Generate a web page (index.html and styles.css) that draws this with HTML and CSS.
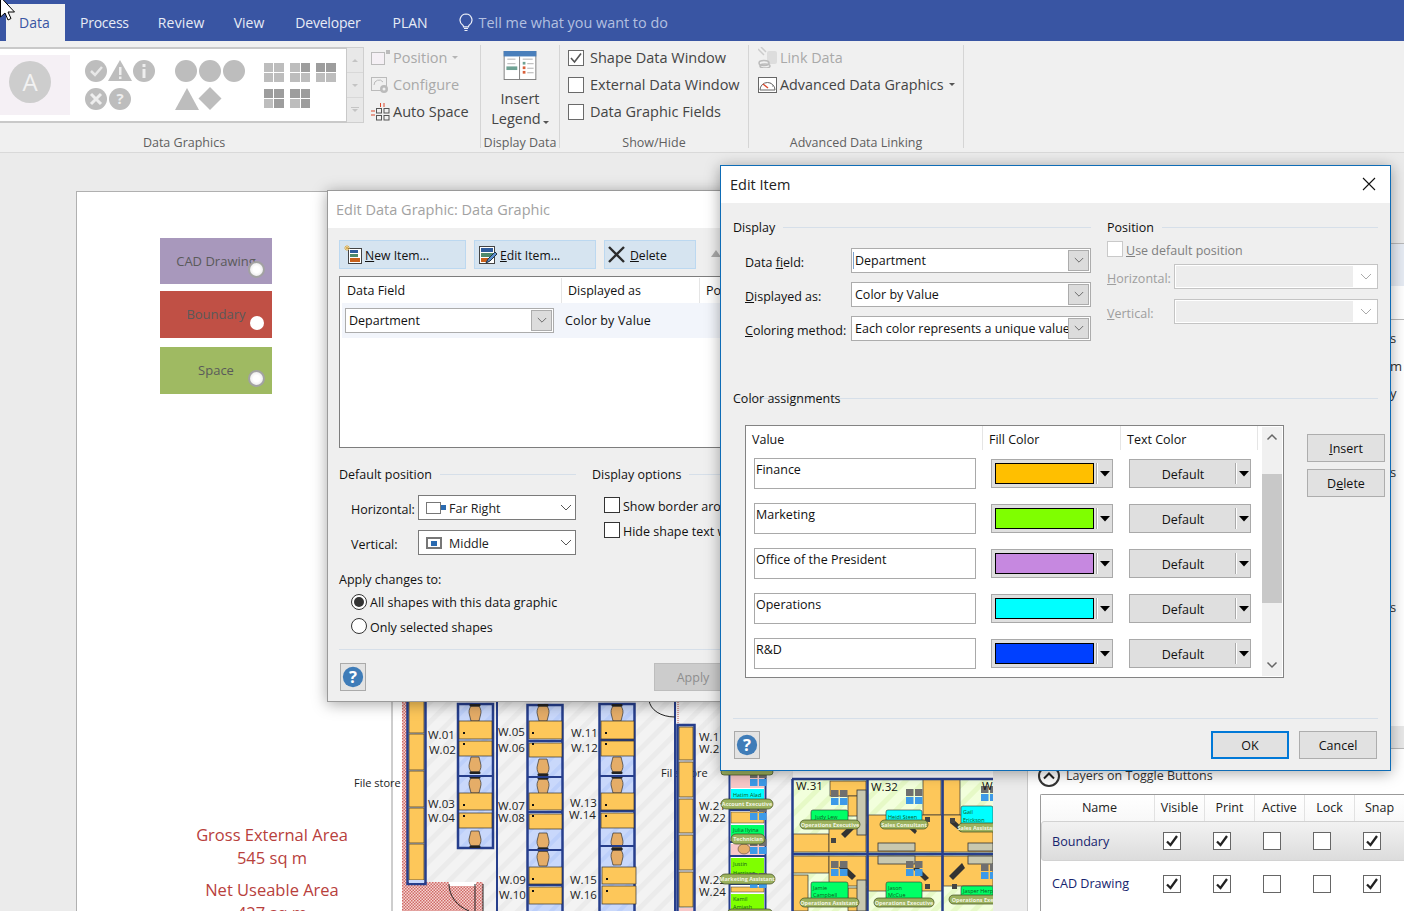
FILE: index.html
```html
<!DOCTYPE html>
<html lang="en">
<head>
<meta charset="utf-8">
<title>Edit Item</title>
<link rel="stylesheet" href="styles.css">
</head>
<body>
<svg class="defs" width="0" height="0">
  <defs>
    <symbol id="chev" viewBox="0 0 12 8"><path d="M1 1l5 5 5-5" fill="none" stroke="currentColor" stroke-width="1"/></symbol>
    <symbol id="tick" viewBox="0 0 16 16"><path d="M3 8l3.500 4L13 3.500" fill="none" stroke="currentColor" stroke-width="1.600"/></symbol>
    <symbol id="tickb" viewBox="0 0 16 16"><path d="M3 8.500l3.500 3.500L13 3" fill="none" stroke="currentColor" stroke-width="2.300"/></symbol>
    <symbol id="help" viewBox="0 0 26 28"><circle cx="13" cy="14" r="11" fill="#3f7cb8"/><text x="13" y="20" class="help-q">?</text></symbol>
    <symbol id="tri" viewBox="0 0 10 6"><path d="M0 0h10L5 5.500z" fill="#000"/></symbol>
    <pattern id="hatch" width="14" height="14" patternUnits="userSpaceOnUse" patternTransform="rotate(-45)"><rect width="14" height="14" fill="#f3f3f3"/><rect width="14" height="5" fill="#ebebeb"/></pattern>
    <pattern id="hatchG" width="14" height="14" patternUnits="userSpaceOnUse" patternTransform="rotate(-45)"><rect width="14" height="14" fill="#f2ffdc"/><rect width="14" height="5" fill="#e6f9c6"/></pattern>
    <pattern id="hatchB" width="12" height="12" patternUnits="userSpaceOnUse" patternTransform="rotate(-45)"><rect width="12" height="12" fill="#c9d8fb"/><rect width="12" height="4" fill="#bccffa"/></pattern>
    <pattern id="checker" width="3" height="3" patternUnits="userSpaceOnUse"><rect width="3" height="3" fill="#f6d5d2"/><rect width="1.500" height="1.500" fill="#cf6a66"/><rect x="1.500" y="1.500" width="1.500" height="1.500" fill="#cf6a66"/></pattern>
    <g id="chair"><path d="M-4-8h8c2 3 2.500 6 1.500 9-.5 2-1 4-1.500 6h-8c-.5-2-1-4-1.500-6-1-3-.5-6 1.500-9z" fill="#e5ad68" stroke="#333" stroke-width=".7"/><rect x="-5.500" y="-10" width="11" height="2.500" rx="1" fill="#222"/></g>
    <g id="windowset"><rect width="7.500" height="7" fill="#6f6f6f"/><rect x="9" width="7.500" height="7" fill="#6f6f6f"/><rect y="8" width="7.500" height="7" fill="#3d9ae8"/><rect x="9" y="8" width="7.500" height="7" fill="#3d9ae8"/></g>
  </defs>
</svg>

<header class="ribbon">
  <nav class="tabs">
    <a class="tab tab-active">Data</a>
    <a class="tab t-process">Process</a>
    <a class="tab t-review">Review</a>
    <a class="tab t-view">View</a>
    <a class="tab t-dev">Developer</a>
    <a class="tab t-plan">PLAN</a>
    <svg class="bulb" width="14" height="19" viewBox="0 0 14 19"><path d="M7 1a6 6 0 0 0-3.400 10.900c.6.5.9 1.100.9 1.900h5c0-.8.3-1.400.9-1.900A6 6 0 0 0 7 1zM5 15.500h4M5.500 17.500h3" fill="none" stroke="#eef1f9" stroke-width="1.200"/></svg>
    <span class="tellme">Tell me what you want to do</span>
  </nav>
  <div class="rbody">
    <section class="grp g-graphics">
      <div class="grp-main">
        <div class="gallery">
          <svg width="347" height="73" viewBox="0 48 347 73">
            <rect x="0" y="54" width="70" height="60" fill="#f5f0f5"/>
            <circle cx="30" cy="81" r="21" fill="#cdcdcd"/>
            <text x="30" y="90" class="gal-a">A</text>
            <circle cx="96" cy="70" r="11" fill="#bdbdbd"/><path d="M91 70l4 4 7-8" stroke="#e8e8e8" stroke-width="2.500" fill="none"/>
            <path d="M120 59l12 21h-24z" fill="#bdbdbd"/><rect x="119" y="66" width="2.500" height="8" fill="#eee"/><rect x="119" y="75.500" width="2.500" height="2.500" fill="#eee"/>
            <circle cx="144" cy="70" r="11" fill="#bdbdbd"/><rect x="142.500" y="68" width="3" height="9" fill="#eee"/><rect x="142.500" y="63" width="3" height="3" fill="#eee"/>
            <circle cx="96" cy="98" r="11" fill="#bdbdbd"/><path d="M91 93l10 10M101 93l-10 10" stroke="#eee" stroke-width="3"/>
            <circle cx="120" cy="98" r="11" fill="#bdbdbd"/><text x="120" y="103" class="gal-q">?</text>
            <circle cx="186" cy="70" r="11" fill="#bdbdbd"/><circle cx="210" cy="70" r="11" fill="#bdbdbd"/><circle cx="234" cy="70" r="11" fill="#bdbdbd"/>
            <path d="M187 87l12 22h-24z" fill="#bdbdbd"/><path d="M210 86l11.500 11.500L210 109l-11.500-11.500z" fill="#bdbdbd"/>
            <g fill="#bdbdbd">
              <rect x="264" y="62" width="9" height="9"/><rect x="274" y="62" width="10" height="9"/><rect x="264" y="72" width="9" height="9"/><rect x="274" y="72" width="10" height="9"/>
              <rect x="290" y="62" width="10" height="9"/><rect x="290" y="72" width="10" height="9"/><rect x="301" y="72" width="9" height="9"/>
              <rect x="326" y="72" width="10" height="9"/><rect x="316" y="72" width="9" height="9"/>
              <rect x="264" y="98" width="9" height="9"/><rect x="290" y="98" width="10" height="9"/>
            </g>
            <g fill="#9d9d9d">
              <rect x="301" y="62" width="9" height="9"/><rect x="316" y="62" width="9" height="9"/><rect x="326" y="62" width="10" height="9"/>
              <rect x="264" y="88" width="9" height="9"/><rect x="274" y="88" width="10" height="9"/><rect x="274" y="98" width="10" height="9"/>
              <rect x="290" y="88" width="10" height="9"/><rect x="301" y="88" width="9" height="9"/><rect x="301" y="98" width="9" height="9"/>
            </g>
          </svg>
        </div>
        <div class="gal-scroll">
          <span class="gal-btn"><i class="up"></i></span>
          <span class="gal-btn"><i class="down"></i></span>
          <span class="gal-btn gal-more"><i class="down"></i></span>
        </div>
        <ul class="cmds cmds-graphics">
          <li class="cmd cmd-off"><svg width="19" height="15" viewBox="0 0 19 15"><rect x=".5" y="2.500" width="13" height="12" fill="#f5f0f5" stroke="#bbb"/><rect x="15" y="0" width="4" height="4" fill="#bbb"/></svg>Position<i class="caret"></i></li>
          <li class="cmd cmd-off"><svg width="19" height="18" viewBox="0 0 19 18"><rect x=".5" y="1.500" width="15" height="13" fill="none" stroke="#bbb"/><circle cx="13" cy="13" r="4" fill="#bbb"/><circle cx="13" cy="13" r="1.500" fill="#f0f0f0"/><path d="M3 9a5 5 0 0 1 9-3" fill="none" stroke="#bbb"/></svg>Configure</li>
          <li class="cmd"><svg width="19" height="19" viewBox="0 0 19 19"><g fill="none" stroke="#555"><rect x="5.500" y="6.500" width="5" height="4.500"/><rect x="13" y="6.500" width="5" height="4.500"/><rect x="5.500" y="13.500" width="5" height="4.500"/><rect x="13" y="13.500" width="5" height="4.500"/></g><path d="M9.500 1v4M13 1v4M0 9h4M0 13h4" stroke="#d9472b"/></svg>Auto Space</li>
        </ul>
      </div>
      <h3 class="grp-label gl-graphics">Data Graphics</h3>
    </section>
    <section class="grp g-display">
      <div class="grp-main legend-btn">
        <svg width="36" height="32" viewBox="0 0 36 32"><rect x=".5" y=".5" width="35" height="31" fill="#fff" stroke="#777"/><rect width="36" height="6" fill="#4a7fbb"/><path d="M17.500 6v25" stroke="#777"/><path d="M4 9h9M4 14h9M21 9h11M26 14h7M26 19h7M26 24h7" stroke="#aaa"/><rect x="3" y="17" width="12" height="4" fill="#6fa294"/><rect x="21" y="12" width="3" height="3" fill="#6fa294"/><rect x="21" y="17" width="3" height="3" fill="#d9603a"/><rect x="21" y="22" width="3" height="3" fill="#d9603a"/></svg>
        <span class="legend-text">Insert<br>Legend<i class="caret dark"></i></span>
      </div>
      <h3 class="grp-label">Display Data</h3>
    </section>
    <section class="grp g-show">
      <ul class="grp-main checks">
        <li class="check"><span class="box"><svg width="16" height="16"><use href="#tick"/></svg></span>Shape Data Window</li>
        <li class="check"><span class="box"></span>External Data Window</li>
        <li class="check"><span class="box"></span>Data Graphic Fields</li>
      </ul>
      <h3 class="grp-label">Show/Hide</h3>
    </section>
    <section class="grp g-adv">
      <ul class="grp-main cmds adv">
        <li class="cmd cmd-off"><svg width="19" height="21" viewBox="0 0 19 21"><path d="M0 2l6 6M3 0l5 5" stroke="#ccc" stroke-width="1.500"/><rect x="9" y="4" width="10" height="13" rx="2" fill="#ddd"/><ellipse cx="6" cy="16" rx="5" ry="2.500" fill="none" stroke="#bbb" stroke-width="1.500"/><ellipse cx="7" cy="19" rx="5" ry="2" fill="none" stroke="#bbb" stroke-width="1.500"/></svg>Link Data</li>
        <li class="cmd"><svg width="19" height="16" viewBox="0 0 19 16"><rect x=".5" y=".5" width="18" height="15" fill="#fff" stroke="#666"/><path d="M2 13a7.500 7.500 0 0 1 15 0z" fill="#fff" stroke="#666"/><path d="M5 7l5 4" stroke="#d9472b" stroke-width="1.400"/><path d="M12 6l1 1M14 9l1 0" stroke="#888"/></svg>Advanced Data Graphics<i class="caret dark"></i></li>
      </ul>
      <h3 class="grp-label">Advanced Data Linking</h3>
    </section>
  </div>
</header>

<main class="workspace">
  <div class="page">
    <svg class="plan" width="916" height="719" viewBox="77 192 916 719">
      <path d="M392 640V911" stroke="#9c9c9c"/>
      <rect x="402" y="640" width="391" height="271" fill="url(#hatch)"/>
      <rect x="402" y="640" width="6" height="271" fill="url(#checker)"/>
      <text x="354" y="787" class="lbl lbl-file">File store</text>
      <text x="661" y="777" class="lbl lbl-file">File store</text>
      <rect x="672" y="770" width="4" height="14" fill="#f1f1f1"/>

      <text x="272" y="841" class="area">Gross External Area</text>
      <text x="272" y="864" class="area">545 sq m</text>
      <text x="272" y="896" class="area">Net Useable Area</text>
      <text x="272" y="919" class="area">427 sq m</text>

      <rect x="408" y="882" width="75" height="29" fill="url(#checker)"/>
      <rect x="449" y="882" width="27" height="4" fill="#fff"/>
      <path d="M449 884c0 12 8 22 20 27" class="thin"/>
      <path d="M475 884V911M483 884V911" class="thin"/>

      <g class="navy">
        <rect x="407.500" y="690" width="18" height="194" />
      </g>
      <g class="desk-s">
        <rect x="409" y="690" width="15" height="43"/><rect x="409" y="734" width="15" height="36"/><rect x="409" y="771" width="15" height="36"/><rect x="409" y="808" width="15" height="35"/><rect x="409" y="844" width="15" height="36"/>
      </g>
      <rect x="409" y="880" width="15" height="3" fill="#c9d8fb"/>

      <path d="M497 690V911M675 690V911" class="navy-l"/>
      <path d="M649 700c1 10 12 17 26 17" class="thin"/>
      <path d="M678 700V730" stroke="#c0504d" stroke-dasharray="1 1"/>

      <!-- desk clusters -->
      <g id="c1">
        <rect x="458" y="704" width="35" height="144" fill="url(#hatchB)" class="navy"/>
        <use href="#chair" x="475" y="714"/>
        <use href="#chair" transform="translate(475 764) rotate(180)"/>
        <use href="#chair" x="475" y="786"/>
        <use href="#chair" transform="translate(475 838) rotate(180)"/>
        <path d="M458 776H493" class="navy-l"/>
        <g class="desk-s"><rect x="459" y="721" width="33" height="18"/><rect x="459" y="741" width="33" height="15"/><rect x="459" y="793" width="33" height="17"/><rect x="459" y="813" width="33" height="15"/></g>
        <g class="dot"><rect x="463" y="732" width="2" height="2"/><rect x="463" y="743" width="2" height="2"/><rect x="463" y="804" width="2" height="2"/><rect x="463" y="815" width="2" height="2"/></g>
      </g>
      <g id="c2">
        <rect x="527.500" y="705" width="35" height="220" fill="url(#hatchB)" class="navy"/>
        <use href="#chair" x="543" y="714"/>
        <use href="#chair" transform="translate(543 766) rotate(180)"/>
        <use href="#chair" x="543" y="787"/>
        <use href="#chair" transform="translate(543 840) rotate(180)"/>
        <use href="#chair" x="543" y="859"/>
        <path d="M527 741H563M527 777H563M527 812H563M527 850H563M527 885H563" class="navy-l"/>
        <g class="desk-s"><rect x="529" y="721" width="33" height="18"/><rect x="529" y="743" width="33" height="14"/><rect x="529" y="793" width="33" height="17"/><rect x="529" y="814" width="33" height="15"/><rect x="529" y="867" width="33" height="17"/><rect x="529" y="887" width="33" height="17"/></g>
        <g class="dot"><rect x="532" y="732" width="2" height="2"/><rect x="532" y="743" width="2" height="2"/><rect x="532" y="804" width="2" height="2"/><rect x="532" y="815" width="2" height="2"/><rect x="532" y="878" width="2" height="2"/><rect x="532" y="890" width="2" height="2"/></g>
      </g>
      <g id="c3">
        <rect x="599.500" y="704" width="35" height="220" fill="url(#hatchB)" class="navy"/>
        <use href="#chair" x="617" y="714"/>
        <use href="#chair" transform="translate(617 764) rotate(180)"/>
        <use href="#chair" x="617" y="786"/>
        <use href="#chair" transform="translate(617 840) rotate(180)"/>
        <use href="#chair" x="617" y="858"/>
        <path d="M599 740H635M599 776H635M599 811H635M599 846H635" class="navy-l"/>
        <g class="desk-s"><rect x="601" y="721" width="33" height="18"/><rect x="601" y="741" width="33" height="15"/><rect x="601" y="793" width="33" height="17"/><rect x="601" y="813" width="33" height="15"/><rect x="602" y="867" width="34" height="17"/><rect x="602" y="886" width="34" height="18"/></g>
        <g class="dot"><rect x="605" y="732" width="2" height="2"/><rect x="605" y="743" width="2" height="2"/><rect x="605" y="804" width="2" height="2"/><rect x="605" y="815" width="2" height="2"/><rect x="606" y="878" width="2" height="2"/><rect x="606" y="890" width="2" height="2"/></g>
      </g>

      <rect x="677.500" y="725" width="17" height="195" class="navy"/>
      <g class="desk-s"><rect x="679" y="727" width="14" height="33"/><rect x="679" y="762" width="14" height="35"/><rect x="679" y="799" width="14" height="34"/><rect x="679" y="835" width="14" height="35"/><rect x="679" y="872" width="14" height="35"/></g>
      <rect x="679" y="908" width="14" height="3" fill="#f8c8c8"/>

      <g class="wlabel">
        <text x="428" y="739">W.01</text><text x="429" y="754">W.02</text><text x="428" y="808">W.03</text><text x="428" y="822">W.04</text>
        <text x="498" y="736">W.05</text><text x="498" y="752">W.06</text><text x="498" y="810">W.07</text><text x="498" y="822">W.08</text><text x="499" y="884">W.09</text><text x="499" y="899">W.10</text>
        <text x="571" y="737">W.11</text><text x="571" y="752">W.12</text><text x="570" y="807">W.13</text><text x="569" y="819">W.14</text><text x="570" y="884">W.15</text><text x="570" y="899">W.16</text>
        <text x="699" y="741">W.1</text><text x="699" y="753">W.2</text><text x="699" y="810">W.21</text><text x="699" y="822">W.22</text><text x="699" y="884">W.23</text><text x="699" y="896">W.24</text>
      </g>

      <!-- narrow column of people -->
      <g>
        <rect x="729" y="771" width="37" height="140" fill="#fff"/>
        <rect x="731" y="775" width="33" height="13" fill="#f8c8c8"/>
        <rect x="731" y="789" width="33" height="19" fill="#00ffff"/>
        <rect x="731" y="812" width="33" height="11" fill="#fdc75a" stroke="#333" stroke-width=".5"/>
        <rect x="731" y="825" width="33" height="14" fill="#00ff66"/>
        <rect x="731" y="844" width="33" height="12" fill="#f8c8c8"/>
        <ellipse cx="744" cy="849" rx="6" ry="5" fill="#e5ad68" stroke="#333" stroke-width=".5"/>
        <rect x="731" y="858" width="33" height="27" fill="#7fff00"/>
        <rect x="731" y="887" width="33" height="5" fill="#fdc75a" stroke="#333" stroke-width=".5"/>
        <rect x="731" y="894" width="33" height="17" fill="#7fff00"/>
        <path d="M729.500 771V911M765.500 771V911M729 810H766M729 842H766M729 856H766M729 884H766" class="navy-l"/>
        <text x="733" y="797" class="tiny">Hatim Alad</text>
        <text x="733" y="832" class="tiny">Julia Ilyina</text>
        <text x="733" y="866" class="tiny">Justin</text><text x="733" y="875" class="tiny">Harrison</text>
        <text x="733" y="901" class="tiny">Kamil</text><text x="733" y="909" class="tiny">Amjash</text>
        <use href="#windowset" x="750" y="771"/><use href="#windowset" x="750" y="805"/><use href="#windowset" x="750" y="839"/><use href="#windowset" x="750" y="873"/>
        <g class="pill"><rect x="721" y="799" width="52" height="10" rx="5"/><rect x="731" y="834" width="34" height="10" rx="5"/><rect x="720" y="874" width="55" height="10" rx="5"/><rect x="727" y="909" width="46" height="10" rx="5"/><rect x="721" y="769" width="52" height="6" rx="3"/></g>
        <g class="pilltext"><text x="747" y="806">Account Executive</text><text x="748" y="841">Technician</text><text x="747" y="881">Marketing Assistant</text></g>
      </g>

      <!-- rooms -->
      <g>
        <rect x="792" y="778" width="201" height="133" fill="url(#hatchG)"/>
        <g class="desk-s">
          <rect x="830" y="781" width="36" height="15"/><rect x="793" y="834" width="36" height="18"/><rect x="829" y="824" width="37" height="28"/>
          <rect x="848" y="796" width="18" height="20"/>
          <rect x="923" y="779" width="18" height="36"/><rect x="868" y="815" width="74" height="37"/><rect x="943" y="779" width="17" height="36"/><rect x="943" y="815" width="50" height="37"/>
          <rect x="793" y="856" width="36" height="17"/><rect x="829" y="856" width="37" height="30"/><rect x="868" y="856" width="74" height="35"/><rect x="943" y="856" width="50" height="30"/>
          <rect x="848" y="888" width="18" height="23"/><rect x="793" y="875" width="15" height="36"/>
        </g>
        <path d="M792 779H993M792 854H993M792.500 779V911M867.500 779V911M942.500 779V911" class="navy-l navy-w"/>
        <g class="fit"><rect x="857" y="790" width="9" height="45"/><rect x="878" y="843" width="37" height="8"/><rect x="878" y="856" width="37" height="8"/><rect x="968" y="843" width="25" height="8"/><rect x="968" y="856" width="25" height="8"/><rect x="857" y="880" width="9" height="31"/></g>
        <g class="chairs"><path d="M841 834l13-12 4 3-13 13z"/><path d="M915 834l-13-12 4-3 11 12z"/><path d="M961 832l-11-9 4-3 10 9z"/><path d="M842 863l14 13-4 4-13-12z"/><path d="M917 866l12 12-4 3-12-12z"/><path d="M962 863l-13 13 4 4 12-12z"/></g>
        <g class="tinybox"><rect x="831" y="838" width="5" height="5"/><rect x="925" y="817" width="5" height="5"/><rect x="950" y="818" width="5" height="5"/><rect x="925" y="884" width="5" height="5"/><rect x="952" y="884" width="5" height="5"/></g>
        <use href="#windowset" x="831" y="790"/><use href="#windowset" x="906" y="789"/><use href="#windowset" x="981" y="786"/>
        <use href="#windowset" x="831" y="861"/><use href="#windowset" x="906" y="861"/><use href="#windowset" x="981" y="864"/>
        <rect x="811" y="810" width="37" height="18" rx="2" fill="#00ff66" stroke="#333" stroke-width=".6"/>
        <rect x="886" y="810" width="36" height="18" rx="2" fill="#00ffff" stroke="#333" stroke-width=".6"/>
        <rect x="961" y="806" width="32" height="24" rx="2" fill="#00ffff" stroke="#333" stroke-width=".6"/>
        <rect x="811" y="882" width="37" height="22" rx="2" fill="#00ff66" stroke="#333" stroke-width=".6"/>
        <rect x="886" y="882" width="36" height="22" rx="2" fill="#00ff66" stroke="#333" stroke-width=".6"/>
        <rect x="961" y="886" width="32" height="16" rx="2" fill="#00ff66" stroke="#333" stroke-width=".6"/>
        <text x="815" y="819" class="tiny">Judy Lew</text><text x="888" y="819" class="tiny">Heidi Steen</text><text x="963" y="814" class="tiny">Gail</text><text x="963" y="822" class="tiny">Erickson</text>
        <text x="813" y="890" class="tiny">Jamie</text><text x="813" y="897" class="tiny">Campbell</text><text x="888" y="890" class="tiny">Jason</text><text x="888" y="897" class="tiny">McCue</text><text x="963" y="893" class="tiny">Jasper Herp</text>
        <g class="pill"><rect x="800" y="820" width="60" height="9" rx="4.500"/><rect x="880" y="820" width="48" height="9" rx="4.500"/><rect x="958" y="823" width="40" height="9" rx="4.500"/><rect x="800" y="898" width="59" height="9" rx="4.500"/><rect x="874" y="898" width="60" height="9" rx="4.500"/><rect x="949" y="895" width="50" height="9" rx="4.500"/></g>
        <g class="pilltext"><text x="830" y="827">Operations Executive</text><text x="904" y="827">Sales Consultant</text><text x="978" y="830">Sales Assistant</text><text x="829" y="905">Operations Assistant</text><text x="904" y="905">Operations Executive</text><text x="974" y="902">Operations Exec</text></g>
        <text x="796" y="790" class="wroom">W.31</text>
        <text x="871" y="791" class="wroom">W.32</text>
        <text x="982" y="790" class="wroom">W</text>
      </g>
    </svg>
    <ul class="legend">
      <li class="leg leg-cad">CAD Drawing<i class="knob"></i></li>
      <li class="leg leg-bound">Boundary<i class="knob knob-on"></i></li>
      <li class="leg leg-space">Space<i class="knob"></i></li>
    </ul>
  </div>

  <aside class="side-top">
    <div class="side-row sr1"></div>
    <div class="side-row sr2"></div>
    <span class="side-s s1">s</span><span class="side-s s2">m</span><span class="side-s s3">y</span><span class="side-s s4">s</span><span class="side-s s5">s</span>
    <div class="side-shade"></div>
  </aside>

  <aside class="layers">
    <div class="layers-head">
      <span class="round-btn"><svg width="12" height="8" viewBox="0 0 12 8"><path d="M1 6.500l5-5 5 5" fill="none" stroke="#222" stroke-width="2"/></svg></span>
      <span class="layers-title">Layers on Toggle Buttons</span>
    </div>
    <div class="ltable">
      <div class="lrow lhead"><span class="lname lname-h">Name</span><span class="lc">Visible</span><span class="lc">Print</span><span class="lc">Active</span><span class="lc">Lock</span><span class="lc">Snap</span></div>
      <div class="lrow lsel"><span class="lname">Boundary</span><span class="lc"><b class="lbox"><svg width="16" height="16"><use href="#tickb"/></svg></b></span><span class="lc"><b class="lbox"><svg width="16" height="16"><use href="#tickb"/></svg></b></span><span class="lc"><b class="lbox"></b></span><span class="lc"><b class="lbox"></b></span><span class="lc"><b class="lbox"><svg width="16" height="16"><use href="#tickb"/></svg></b></span></div>
      <div class="lrow lplain"><span class="lname">CAD Drawing</span><span class="lc"><b class="lbox"><svg width="16" height="16"><use href="#tickb"/></svg></b></span><span class="lc"><b class="lbox"><svg width="16" height="16"><use href="#tickb"/></svg></b></span><span class="lc"><b class="lbox"></b></span><span class="lc"><b class="lbox"></b></span><span class="lc"><b class="lbox"><svg width="16" height="16"><use href="#tickb"/></svg></b></span></div>
    </div>
  </aside>
</main>

<!-- Edit Data Graphic window -->
<div class="dialog dlg-graphic">
  <div class="dlg-title dlg-title-off">Edit Data Graphic: Data Graphic</div>
  <div class="dlg-body">
    <div class="toolbar">
      <button class="tb tb-new"><svg width="18" height="20" viewBox="0 0 18 20"><rect x="4.500" y="3.500" width="13" height="15" fill="#fff" stroke="#444"/><rect x="6" y="5" width="8" height="3" fill="#2f5c9c"/><rect x="6" y="9" width="8" height="3" fill="#4f8a6c"/><rect x="6" y="13" width="10" height="4" fill="#c8601a"/><path d="M3 0v6M0 3h6M1 1l4 4M5 1l-4 4" stroke="#e0b050"/></svg><span><u>N</u>ew Item...</span></button>
      <button class="tb tb-edit"><svg width="18" height="20" viewBox="0 0 18 20"><rect x=".5" y="1.500" width="15" height="17" fill="#fff" stroke="#444"/><rect x="2" y="3" width="12" height="4" fill="#2f5c9c"/><rect x="2" y="8" width="12" height="4" fill="#4f8a6c"/><rect x="2" y="13" width="8" height="4" fill="#c8601a"/><path d="M7 18l2-4 7-7 2 2-7 7z" fill="#5b8fd0" stroke="#234"/></svg><span><u>E</u>dit Item...</span></button>
      <button class="tb tb-del"><svg width="20" height="18" viewBox="0 0 20 18"><path d="M2 1l15 15M17 1L2 16" stroke="#2c2c2c" stroke-width="2.400"/></svg><span><u>D</u>elete</span></button>
      <i class="tb-up"></i>
    </div>
    <div class="dlist">
      <div class="dlist-head"><span class="dh dh1">Data Field</span><span class="dh dh2">Displayed as</span><span class="dh dh3">Position</span></div>
      <div class="dlist-row">
        <div class="combo combo-dept"><span class="combo-v">Department</span><span class="combo-b"><svg width="12" height="8"><use href="#chev"/></svg></span></div>
        <span class="dlist-val">Color by Value</span>
      </div>
    </div>
    <div class="opts">
      <div class="opt-left">
        <div class="sec"><span>Default position</span></div>
        <div class="frow fr-h"><label>Horizontal:</label><div class="select"><svg width="20" height="12" viewBox="0 0 20 12"><rect x=".5" y=".5" width="14" height="11" fill="none" stroke="#777"/><rect x="15" y="3" width="5" height="5" fill="#2a6ab0"/></svg><span class="sel-far">Far Right</span><svg class="sel-chev" width="12" height="8"><use href="#chev"/></svg></div></div>
        <div class="frow fr-v"><label>Vertical:</label><div class="select"><svg width="20" height="12" viewBox="0 0 20 12"><rect x="1" y="1" width="14" height="10" fill="none" stroke="#777" stroke-width="2"/><rect x="5" y="4" width="6" height="5" fill="#2a6ab0"/></svg><span class="sel-mid">Middle</span><svg class="sel-chev" width="12" height="8"><use href="#chev"/></svg></div></div>
      </div>
      <div class="opt-right">
        <div class="sec sec-long"><span>Display options</span></div>
        <div class="cb cb1"><i class="cbox"></i>Show border around shape</div>
        <div class="cb cb2"><i class="cbox"></i>Hide shape text when</div>
      </div>
    </div>
    <div class="apply-h">Apply changes to:</div>
    <div class="radio r1"><i class="rad rad-on"></i>All shapes with this data graphic</div>
    <div class="radio r2"><i class="rad"></i>Only selected shapes</div>
    <div class="sep sep-g"></div>
    <div class="dlg-foot">
      <button class="help-btn"><svg width="24" height="26"><use href="#help"/></svg></button>
      <button class="btn-apply">Apply</button>
    </div>
  </div>
</div>

<!-- Edit Item window -->
<div class="dialog dlg-item">
  <div class="dlg-title">Edit Item<svg class="close" width="14" height="14" viewBox="0 0 14 14"><path d="M1 1l12 12M13 1L1 13" stroke="#111" stroke-width="1.100"/></svg></div>
  <div class="dlg-body item-body">
    <div class="item-top">
      <div class="item-display">
        <div class="sec"><span>Display</span></div>
        <div class="irow ir1"><label>Data <u>f</u>ield:</label><div class="combo combo-i combo-caret"><span class="combo-v">Department</span><span class="combo-b"><svg width="12" height="8"><use href="#chev"/></svg></span></div></div>
        <div class="irow"><label><u>D</u>isplayed as:</label><div class="combo combo-i"><span class="combo-v">Color by Value</span><span class="combo-b"><svg width="12" height="8"><use href="#chev"/></svg></span></div></div>
        <div class="irow"><label><u>C</u>oloring method:</label><div class="combo combo-i"><span class="combo-v">Each color represents a unique value</span><span class="combo-b"><svg width="12" height="8"><use href="#chev"/></svg></span></div></div>
      </div>
      <div class="item-pos">
        <div class="sec"><span>Position</span></div>
        <div class="cb cb-off"><i class="cbox cbox-off"></i><span><u>U</u>se default position</span></div>
        <div class="prow pr1"><label><u>H</u>orizontal:</label><div class="pselect"><span class="pfill"></span><svg width="12" height="8"><use href="#chev"/></svg></div></div>
        <div class="prow pr2"><label><u>V</u>ertical:</label><div class="pselect"><span class="pfill"></span><svg width="12" height="8"><use href="#chev"/></svg></div></div>
      </div>
    </div>
    <div class="sec sec-through"><span>Color assignments</span></div>
    <div class="assign">
      <div class="atable">
        <div class="amain">
          <div class="ahead"><span class="ah1">Value</span><span class="ah2">Fill Color</span><span class="ah3">Text Color</span></div>
          <div class="arow"><span class="aval">Finance</span><span class="afill"><i class="swatch sw-fin"></i><i class="adiv"></i><svg width="10" height="6"><use href="#tri"/></svg></span><span class="atext"><em>Default</em><i class="adiv"></i><svg width="10" height="6"><use href="#tri"/></svg></span></div>
          <div class="arow"><span class="aval">Marketing</span><span class="afill"><i class="swatch sw-mkt"></i><i class="adiv"></i><svg width="10" height="6"><use href="#tri"/></svg></span><span class="atext"><em>Default</em><i class="adiv"></i><svg width="10" height="6"><use href="#tri"/></svg></span></div>
          <div class="arow"><span class="aval">Office of the President</span><span class="afill"><i class="swatch sw-off"></i><i class="adiv"></i><svg width="10" height="6"><use href="#tri"/></svg></span><span class="atext"><em>Default</em><i class="adiv"></i><svg width="10" height="6"><use href="#tri"/></svg></span></div>
          <div class="arow"><span class="aval">Operations</span><span class="afill"><i class="swatch sw-ops"></i><i class="adiv"></i><svg width="10" height="6"><use href="#tri"/></svg></span><span class="atext"><em>Default</em><i class="adiv"></i><svg width="10" height="6"><use href="#tri"/></svg></span></div>
          <div class="arow"><span class="aval">R&amp;D</span><span class="afill"><i class="swatch sw-rd"></i><i class="adiv"></i><svg width="10" height="6"><use href="#tri"/></svg></span><span class="atext"><em>Default</em><i class="adiv"></i><svg width="10" height="6"><use href="#tri"/></svg></span></div>
        </div>
        <div class="ascroll">
          <svg width="12" height="8" viewBox="0 0 12 8"><path d="M1.500 6.500L6 2l4.500 4.500" fill="none" stroke="#666" stroke-width="1.500"/></svg>
          <span class="athumb"></span>
          <svg width="12" height="8" viewBox="0 0 12 8"><path d="M1.500 1.500L6 6l4.500-4.500" fill="none" stroke="#666" stroke-width="1.500"/></svg>
        </div>
      </div>
      <div class="aside-btns">
        <button class="gbtn"><u>I</u>nsert</button>
        <button class="gbtn">D<u>e</u>lete</button>
      </div>
    </div>
    <div class="sep sep-i"></div>
    <div class="dlg-foot foot-i">
      <button class="help-btn"><svg width="24" height="26"><use href="#help"/></svg></button>
      <div class="foot-right">
        <button class="gbtn gbtn-ok">OK</button>
        <button class="gbtn">Cancel</button>
      </div>
    </div>
  </div>
</div>

<svg class="cursor" width="17" height="26" viewBox="0 0 17 26"><path d="M.5-3L.5 17l4.500-4 3 7 3-1.500-3-6.500h6.500z" fill="#fff" stroke="#000"/></svg>
</body>
</html>
```
FILE: styles.css
```css
* { box-sizing: border-box; }
html, body { margin: 0; padding: 0; }
body {
  width: 1404px; height: 911px; overflow: hidden; position: relative;
  background: #ebebeb; color: #111;
  font-family: "Open Sans", "Noto Sans", sans-serif; font-size: 12.5px;
}
ul { list-style: none; margin: 0; padding: 0; }
h3 { margin: 0; font-weight: 400; }
i, em { font-style: normal; }
button { font: inherit; color: inherit; padding: 0; cursor: default; }
.defs { position: absolute; }
.help-q { font: 700 18px "Open Sans", sans-serif; fill: #fff; text-anchor: middle; }

/* Ribbon */
.ribbon { height: 153px; background: #f0f0f0; border-bottom: 1px solid #d9d9d9; }
.tabs { height: 41px; background: #3955a3; display: flex; align-items: flex-end; padding-left: 6px; font-size: 14px; color: #e8ecf6; }
.tab { display: block; height: 37px; line-height: 37px; }
.tab-active { width: 59px; background: #f0f0f0; color: #3955a3; padding-left: 13px; }
.t-process { margin-left: 15px; letter-spacing: -.25px; }
.t-review { margin-left: 29px; letter-spacing: .2px; }
.t-view { margin-left: 29px; }
.t-dev { margin-left: 31px; letter-spacing: -.2px; }
.t-plan { margin-left: 32px; }
.bulb { margin: 0 0 9px 31px; }
.tellme { margin-left: 6px; height: 37px; line-height: 37px; color: #b4c0e0; font-size: 14.400px; }

.rbody { height: 111px; display: flex; }
.grp { display: flex; flex-direction: column; position: relative; flex: none; padding-top: 6px; }
.grp-main { height: 84px; }
.grp-label { position: absolute; left: 0; right: 0; top: 90px; text-align: center; font-size: 12.500px; line-height: 16px; color: #5f5f5f; }
.g-graphics { width: 481px; border-right: 1px solid #d5d5d5; margin: 4px 0 4px; padding-top: 2px; }
.g-graphics .grp-main { display: flex; }
.gl-graphics { left: 0; width: 368px; }
.gallery { width: 347px; height: 76px; background: #fff; border: 2px solid #c9c9c9; border-left: 0; border-right: 1px solid #c9c9c9; }
.gallery svg { display: block; }
.gal-scroll { width: 17px; height: 76px; display: flex; flex-direction: column; border: 1px solid #cfcfcf; border-left: 0; background: #e8e8e8; }
.gal-btn { flex: 1; display: flex; align-items: center; justify-content: center; border-bottom: 1px solid #d8d8d8; position: relative; }
.gal-more { border-bottom: 0; }
.gal-btn i { width: 0; height: 0; border: 3.500px solid transparent; }
.gal-btn .up { border-bottom-color: #c4c4c4; border-top-width: 0; }
.gal-btn .down { border-top-color: #c4c4c4; border-bottom-width: 0; }
.gal-more::before { content: ""; position: absolute; top: 9px; left: 4px; width: 8px; height: 1px; background: #c4c4c4; }
.cmds { margin-left: 7px; display: flex; flex-direction: column; gap: 0; font-size: 14.500px; }
.cmds-graphics { margin-top: -3px; }
.cmd { height: 27px; display: flex; align-items: center; gap: 3px; white-space: nowrap; color: #444; }
.cmd-off { color: #a9a9a9; }
.caret { display: inline-block; width: 0; height: 0; border: 3px solid transparent; border-top: 3.500px solid #b5b5b5; border-bottom: 0; margin-left: 2px; }
.caret.dark { border-top-color: #555; }

.g-display { width: 79px; border-right: 1px solid #d5d5d5; margin: 4px 0; padding-top: 0; }
.legend-btn { display: flex; flex-direction: column; align-items: center; padding-top: 6px; font-size: 14.500px; color: #444; }
.legend-text { text-align: center; line-height: 20px; margin-top: 9px; }
.g-display .grp-label, .g-show .grp-label, .g-adv .grp-label { top: 90px; }
.g-show { width: 189px; border-right: 1px solid #d5d5d5; margin: 4px 0; padding-top: 0; }
.checks { padding: 0 0 0 8px; margin-top: -1px; font-size: 14.500px; color: #444; }
.check { height: 27px; display: flex; align-items: center; gap: 6px; white-space: nowrap; }
.box { width: 16px; height: 16px; background: #fff; border: 1px solid #6a6a6a; display: block; color: #555; flex: none; }
.box svg { display: block; margin: -1px; }
.g-adv { width: 215px; border-right: 1px solid #d5d5d5; margin: 4px 0; padding-top: 0; }
.adv { margin-left: 9px; margin-top: -1px; font-size: 14.350px; }

/* Workspace canvas */
.workspace { position: relative; height: 758px; }
.page { position: absolute; left: 76px; top: 38px; width: 917px; height: 760px; background: #fff; border: 1px solid #b0b0b0; border-width: 1px 0 0 1px; }
.plan { position: absolute; left: 0; top: 0; font-family: "Open Sans", sans-serif; }
.legend { position: absolute; left: 83px; top: 46px; width: 112px; }
.leg { position: relative; display: flex; align-items: center; justify-content: center; font-size: 13px; color: #5a5a5a; }
.leg-cad { height: 46px; background: #a898bc; }
.leg-bound { height: 47px; margin-top: 7px; background: #c05045; padding-bottom: 2px; }
.leg-space { height: 47px; margin-top: 9px; background: #9fba62; padding-bottom: 2px; }
.knob { position: absolute; right: 7px; top: 23px; width: 17px; height: 17px; border-radius: 50%; background: radial-gradient(circle, #fff 35%, #dedede); border: 2.500px solid #a2a2a2; }
.knob-on { border: 0; background: #fff; width: 14px; height: 14px; right: 8px; top: 25px; }

.lbl { font-size: 11px; fill: #222; }
.area { font-size: 16.500px; fill: #b8403c; text-anchor: middle; }
.thin { fill: none; stroke: #222; stroke-width: 1; }
.navy { fill: none; stroke: #263e8c; stroke-width: 2.500; }
#c1 .navy, #c2 .navy, #c3 .navy { fill: url(#hatchB); }
.navy-l { fill: none; stroke: #263e8c; stroke-width: 2; }
.navy-w { stroke-width: 2.500; }
.desk-s rect { fill: #fdc75a; stroke: #333; stroke-width: .7; }
.dot rect { fill: #111; }
.wlabel text { font-size: 11.500px; fill: #222; }
.wroom { font-size: 11.500px; fill: #111; }
.tiny { font-size: 5.500px; fill: #105a20; }
.pill rect { fill: #9cb25f; stroke: #3d4a1e; stroke-width: .7; }
.pilltext text { font-size: 5.500px; font-weight: 700; fill: #f2f5e3; text-anchor: middle; }
.fit rect { fill: #c8c8b0; stroke: #333; stroke-width: .8; }
.chairs path { fill: #333; }
.tinybox rect { fill: #444; }
.gal-a { font-size: 24px; fill: #f2f2f2; text-anchor: middle; font-family: "Open Sans", sans-serif; }
.gal-q { font-size: 15px; font-weight: 700; fill: #eee; text-anchor: middle; font-family: "Open Sans", sans-serif; }

/* strip at right of Edit Item */
.side-top { position: absolute; left: 1391px; top: 90px; width: 13px; height: 510px; background: #fff; border-top: 1px solid #b8b8b8; font-size: 13px; color: #333; }
.side-row { position: absolute; left: 0; right: 0; }
.sr1 { top: 0; height: 42px; background: #e6ebf3; }
.sr2 { top: 75px; height: 1px; background: #b8b8b8; }
.side-s { position: absolute; left: -1px; line-height: 16px; }
.s1 { top: 86px; } .s2 { top: 114px; } .s3 { top: 141px; } .s4 { top: 220px; } .s5 { top: 355px; }
.side-shade { position: absolute; left: 0; right: 0; top: 482px; height: 23px; background: #e8e8e8; border-bottom: 1px solid #b8b8b8; }

.layers { position: absolute; left: 1027px; top: 600px; width: 377px; height: 160px; background: #fff; border-left: 1px solid #c8c8c8; }
.layers-head { position: absolute; left: 10px; top: 12px; display: flex; align-items: center; gap: 6px; }
.round-btn { width: 22px; height: 22px; border: 2px solid #333; border-radius: 50%; display: flex; align-items: center; justify-content: center; background: #fff; }
.layers-title { font-size: 12.500px; color: #333; padding-bottom: 2px; }
.ltable { position: absolute; left: 12px; top: 41px; width: 365px; height: 130px; border: 1px solid #9a9a9a; border-right: 0; border-radius: 2px 0 0 0; }
.lrow { display: flex; align-items: center; }
.lname { width: 113px; padding-left: 10px; font-size: 12.600px; color: #16246e; }
.lname-h { padding-left: 4px; text-align: center; color: #222; padding-bottom: 2px; }
.lc { width: 50px; text-align: center; font-size: 12.500px; color: #222; display: flex; justify-content: center; }
.lhead { height: 26px; background: linear-gradient(#fff, #f8f8f8); }
.lhead .lc { border-left: 1px solid #e2e2e2; height: 26px; align-items: center; padding-bottom: 2px; }
.lsel { height: 40px; background: linear-gradient(#f2f2f2, #dcdcdc); border: 1px solid #d2d2d2; border-radius: 3px 0 0 3px; margin-top: 0; }
.lplain { height: 42px; margin-top: 1px; }
.lsel .lc, .lplain .lc { justify-content: flex-start; padding-left: 9px; }
.lsel .lname { width: 112px; }
.lplain .lname { padding-left: 11px; }
.lbox { width: 18px; height: 18px; background: #fff; border: 1px solid #666; color: #222; display: block; }
.lbox svg { display: block; }
.lplain .lbox { margin-top: 2px; }

/* Dialog windows */
.dialog { position: absolute; background: #efefef; box-shadow: 0 2px 14px rgba(0,0,0,.35); }
.dlg-graphic { left: 327px; top: 190px; width: 420px; height: 512px; border: 1px solid #9a9a9a; }
.dlg-item { left: 720px; top: 165px; width: 671px; height: 606px; border: 1px solid #0e6cb6; }
.dlg-title { height: 37px; background: #fff; font-size: 14.500px; line-height: 37px; padding-left: 9px; color: #222; position: relative; }
.dlg-title-off { color: #a2a2a2; padding-left: 8px; }
.close { position: absolute; right: 14px; top: 11px; }
.dlg-body { padding: 12px 0 0 11px; }

.toolbar { display: flex; gap: 8px; height: 29px; align-items: stretch; }
.tb { display: flex; align-items: center; gap: 3px; background: #d6e4f0; border: 1px solid #bcd8f0; padding-left: 4px; font-size: 12.200px; line-height: 18px; }
.tb span { padding-top: 2px; }
.tb-new { width: 127px; padding-left: 4px; } .tb-edit { width: 122px; } .tb-del { width: 92px; padding-left: 2px; gap: 3px; }
.tb-up { width: 0; height: 0; border: 5px solid transparent; border-bottom: 7px solid #aaa; border-top: 0; margin: 10px 0 0 7px; }
.dlist { margin-top: 7px; height: 172px; width: 420px; background: #fff; border: 1px solid #7d7d7d; border-right: 0; }
.dlist-head { display: flex; height: 26px; align-items: center; }
.dh { font-size: 12.500px; padding-left: 6px; height: 25px; line-height: 25px; }
.dh1 { width: 221px; padding-left: 7px; }
.dh2 { width: 138px; border-left: 1px solid #e5e5e5; }
.dh3 { border-left: 1px solid #e5e5e5; white-space: nowrap; }
.dlist-row { display: flex; align-items: center; height: 35px; background: #f2f5fb; margin-left: 2px; padding-left: 3px; }
.combo { display: flex; align-items: center; height: 25px; background: #fff; border: 1px solid #acacac; }
.combo-dept { width: 209px; }
.combo-v { flex: 1; padding-left: 3px; white-space: nowrap; overflow: hidden; font-size: 12.500px; }
.combo-b { width: 21px; height: 21px; margin-right: 1px; background: #dcdcdc; border: 1px solid #acacac; display: flex; align-items: center; justify-content: center; color: #555; flex: none; }
.combo-b svg { width: 10px; height: 7px; }
.dlist-val { margin-left: 11px; letter-spacing: .15px; }
.opts { display: flex; gap: 16px; margin-top: 18px; }
.opt-left { width: 237px; flex: none; }
.opt-right { flex: 1; min-width: 0; overflow: hidden; white-space: nowrap; }
.sec { display: flex; align-items: flex-start; gap: 8px; height: 16px; line-height: 18px; }
.sec::after { content: ""; flex: 1; height: 1px; background: #d6dfe9; align-self: center; }
.frow { display: flex; align-items: center; height: 25px; }
.fr-h { margin-top: 13px; }
.fr-v { margin-top: 10px; }
.frow label { width: 79px; padding: 4px 0 0 12px; }
.select { flex: 1; height: 25px; background: #fff; border: 1px solid #7a7a7a; display: flex; align-items: center; padding: 0 3px 0 7px; color: #222; }
.sel-far, .sel-mid { margin-left: 3px; flex: 1; padding-top: 2px; }
.sel-chev { color: #555; }
.cb { display: flex; align-items: flex-start; gap: 3px; height: 16px; line-height: 20px; white-space: nowrap; }
.cb1 { margin: 15px 0 0 12px; }
.cb2 { margin: 9px 0 0 12px; }
.cbox { width: 16px; height: 16px; background: #fff; border: 1px solid #333; flex: none; display: block; }
.apply-h { margin-top: 16px; height: 16px; line-height: 18px; }
.radio { display: flex; align-items: center; gap: 3px; height: 16px; margin-left: 12px; white-space: nowrap; }
.r1 { margin-top: 7px; }
.r2 { margin-top: 8px; align-items: flex-start; line-height: 20px; }
.rad { width: 16px; height: 16px; border: 1px solid #333; border-radius: 50%; background: #fff; display: flex; align-items: center; justify-content: center; }
.rad-on::after { content: ""; width: 10px; height: 10px; border-radius: 50%; background: #333; }
.sep { height: 1px; background: #d6dfe9; }
.sep-g { margin-top: 15px; }
.dlg-foot { display: flex; justify-content: space-between; margin-top: 13px; height: 28px; }
.help-btn { width: 26px; height: 28px; background: #e3e3e3; border: 1px solid #aaa; display: flex; align-items: center; justify-content: center; margin-left: 1px; }
.btn-apply { width: 78px; height: 28px; background: #ccc; border: 1px solid #bdbdbd; color: #8e8e8e; }
.dlg-graphic .dlg-foot { position: relative; width: 393px; }

.item-body { padding: 16px 12px 0 12px; }
.item-top { display: flex; gap: 16px; }
.item-display { width: 358px; flex: none; }
.item-pos { flex: 1; }
.irow { display: flex; align-items: center; margin-top: 9px; height: 25px; }
.ir1 { margin-top: 13px; }
.irow label { width: 118px; padding-left: 12px; white-space: nowrap; padding-top: 3px; flex: none; }
.combo-i { flex: 1; min-width: 0; }
.combo-caret .combo-v { box-shadow: inset 1px 0 0 #7da2ce; margin-left: 1px; padding-left: 2px; }
.cb-off { margin-top: 6px; color: #7f7f7f; gap: 3px; }
.cbox-off { border-color: #c9c9c9; }
.prow { display: flex; align-items: center; height: 25px; color: #9e9e9e; }
.pr1 { margin-top: 7px; }
.pr2 { margin-top: 10px; }
.prow label { width: 67px; flex: none; white-space: nowrap; padding-top: 4px; }
.pselect { flex: 1; height: 25px; background: #fff; border: 1px solid #c4c4c4; display: flex; align-items: center; color: #aaa; padding-right: 5px; }
.pfill { flex: 1; height: 21px; margin: 0 7px 0 1px; background: #ededed; }
.sec-through { margin-top: 49px; position: relative; display: block; }
.sec-through::after { content: ""; position: absolute; left: 0; right: 0; top: 8px; height: 1px; }
.sec-through span { position: relative; z-index: 1; }
.assign { display: flex; margin: 19px 0 0 12px; gap: 23px; align-items: flex-start; }
.atable { width: 539px; height: 253px; background: #fff; border: 1px solid #838383; display: flex; flex: none; }
.amain { width: 516px; flex: none; }
.ahead { display: flex; height: 24px; align-items: center; }
.ahead span { height: 24px; line-height: 28px; padding-left: 6px; }
.ah1 { width: 236px; }
.ah2 { width: 138px; border-left: 1px solid #e5e5e5; }
.ah3 { border-left: 1px solid #e5e5e5; width: 138px; border-right: 1px solid #e5e5e5; }
.arow { display: flex; height: 31px; margin-top: 14px; padding-left: 8px; align-items: flex-start; }
.ahead + .arow { margin-top: 8px; }
.aval { width: 222px; height: 31px; border: 1px solid #a9a9a9; padding-left: 1px; line-height: 22px; background: #fff; }
.afill, .atext { width: 122px; height: 29px; margin-top: 1px; background: #dfdfdf; border: 1px solid #a9a9a9; display: flex; align-items: center; position: relative; }
.afill { margin-left: 15px; padding-left: 3px; }
.atext { margin-left: 16px; }
.atext em { width: 106px; text-align: center; padding-top: 2px; }
.swatch { width: 99px; height: 21px; border: 1px solid #000; flex: none; display: block; }
.adiv { width: 1px; height: 21px; background: #fff; box-shadow: -1px 0 0 #a9a9a9; flex: none; margin-left: 3px; }
.atext .adiv { margin-left: 0; }
.afill svg, .atext svg { margin-left: 2px; flex: none; width: 10px; height: 6px; }
.sw-fin { background: #ffbf00; }
.sw-mkt { background: #7fff00; }
.sw-off { background: #c688e0; }
.sw-ops { background: #00ffff; }
.sw-rd { background: #0040ff; }
.ascroll { width: 20px; margin: 1px 0; background: #f0f0f0; display: flex; flex-direction: column; align-items: center; padding-top: 6px; color: #666; }
.athumb { width: 20px; height: 129px; background: #c8c8c8; margin: 33px 0 58px; flex: none; }
.aside-btns { display: flex; flex-direction: column; gap: 7px; margin-top: 9px; }
.gbtn { width: 78px; height: 28px; background: #e1e1e1; border: 1px solid #adadad; text-align: center; }
.sep-i { margin-top: 40px; }
.foot-i { margin-top: 12px; height: 28px; }
.foot-right { display: flex; gap: 10px; margin-right: 1px; }
.gbtn-ok { border: 2px solid #0078d7; }
.cursor { position: absolute; left: 0; top: 0; }
```
